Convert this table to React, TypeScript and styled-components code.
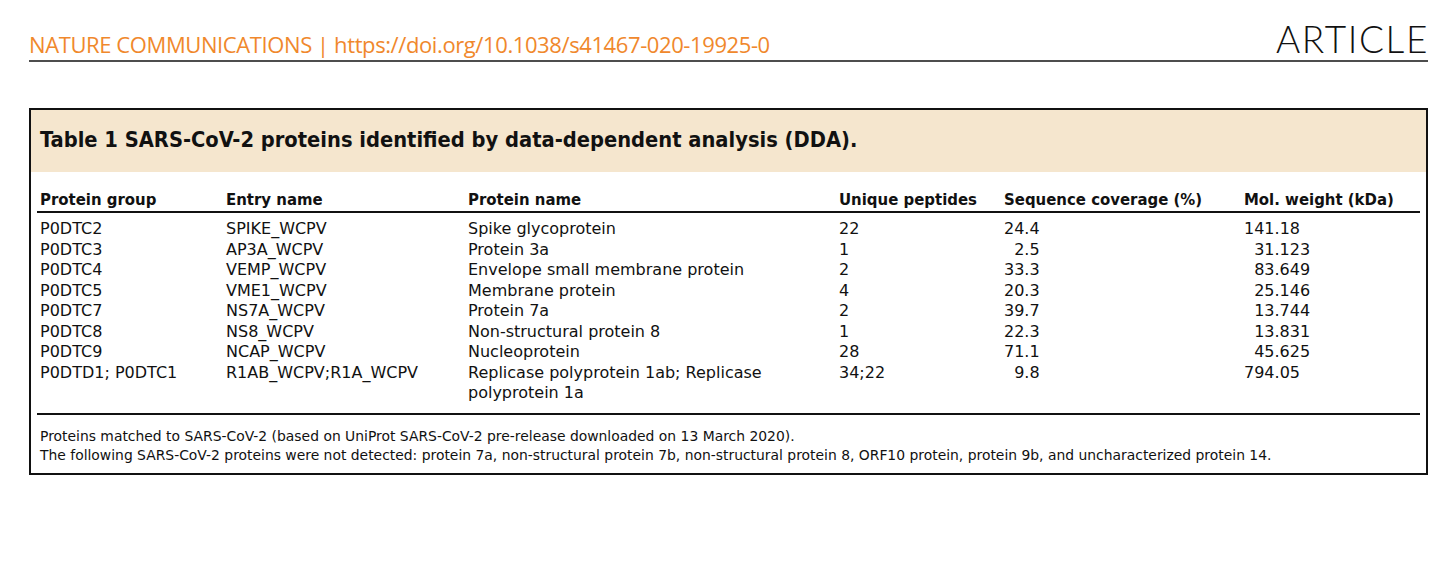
import { createGlobalStyle } from "styled-components";
import styled from "styled-components";

const GlobalStyle = createGlobalStyle`
  body {
    margin: 0;
    background: #fff;
    color: #111;
  }
`;

const Page = styled.div`
  width: 1456px;
  box-sizing: border-box;
  padding: 0 28px 0 29px;
`;

const Masthead = styled.header`
  display: flex;
  justify-content: space-between;
  align-items: baseline;
  padding-top: 20px;
  padding-bottom: 3px;
  border-bottom: 2px solid #4d4d4d;
`;

const Journal = styled.div`
  font-family: "Open Sans", sans-serif;
  font-size: 22px;
  line-height: 1;
  color: #f0882c;
  letter-spacing: -0.4px;
`;

const Kind = styled.div`
  font-family: "Lato", sans-serif;
  font-weight: 300;
  font-size: 37px;
  line-height: 1;
  letter-spacing: 1.6px;
  margin-right: -1px;
  color: #111;
`;

const TableBox = styled.section`
  margin-top: 46px;
  border: 2px solid #111;
  font-family: "DejaVu Sans", sans-serif;
`;

const Caption = styled.h2`
  margin: 0;
  height: 62px;
  box-sizing: border-box;
  padding: 16px 9px 0;
  background: #f5e6ce;
  font-family: "DejaVu Sans Condensed", "DejaVu Sans", sans-serif;
  font-size: 21.7px;
  line-height: 27px;
  font-weight: bold;
`;

const Grid = styled.div`
  margin: 0 6px;
  padding-top: 18px;
`;

const cols = "186px 242px 371px 165px 240px 1fr";

const HeadRow = styled.div`
  display: grid;
  grid-template-columns: ${cols};
  border-bottom: 2px solid #111;
  padding-bottom: 1px;
`;

const HeadCell = styled.div`
  padding-left: 3px;
  font-family: "DejaVu Sans Condensed", "DejaVu Sans", sans-serif;
  font-size: 16.6px;
  line-height: 20px;
  font-weight: bold;
`;

const Body = styled.div`
  padding-top: 6px;
  padding-bottom: 9px;
  border-bottom: 2px solid #111;
`;

const Row = styled.div`
  display: grid;
  grid-template-columns: ${cols};
`;

const Cell = styled.div<{ $indent?: number }>`
  padding-left: calc(3px + ${(p) => p.$indent ?? 0}ch);
  font-size: 16px;
  line-height: 20.5px;
`;

const Notes = styled.div`
  padding: 12px 9px 7px;
  font-size: 13.9px;
  line-height: 19.5px;
`;

const Note = styled.p`
  margin: 0;
`;

type Protein = {
  group: string;
  entry: string;
  name: string[];
  peptides: string;
  coverage: string;
  weight: string;
};

const proteins: Protein[] = [
  { group: "P0DTC2", entry: "SPIKE_WCPV", name: ["Spike glycoprotein"], peptides: "22", coverage: "24.4", weight: "141.18" },
  { group: "P0DTC3", entry: "AP3A_WCPV", name: ["Protein 3a"], peptides: "1", coverage: "2.5", weight: "31.123" },
  { group: "P0DTC4", entry: "VEMP_WCPV", name: ["Envelope small membrane protein"], peptides: "2", coverage: "33.3", weight: "83.649" },
  { group: "P0DTC5", entry: "VME1_WCPV", name: ["Membrane protein"], peptides: "4", coverage: "20.3", weight: "25.146" },
  { group: "P0DTC7", entry: "NS7A_WCPV", name: ["Protein 7a"], peptides: "2", coverage: "39.7", weight: "13.744" },
  { group: "P0DTC8", entry: "NS8_WCPV", name: ["Non-structural protein 8"], peptides: "1", coverage: "22.3", weight: "13.831" },
  { group: "P0DTC9", entry: "NCAP_WCPV", name: ["Nucleoprotein"], peptides: "28", coverage: "71.1", weight: "45.625" },
  {
    group: "P0DTD1; P0DTC1",
    entry: "R1AB_WCPV;R1A_WCPV",
    name: ["Replicase polyprotein 1ab; Replicase", "polyprotein 1a"],
    peptides: "34;22",
    coverage: "9.8",
    weight: "794.05",
  },
];

const headers = [
  "Protein group",
  "Entry name",
  "Protein name",
  "Unique peptides",
  "Sequence coverage (%)",
  "Mol. weight (kDa)",
];

// line numbers up on the decimal point
const intDigits = (v: string) => v.split(".")[0].length;

export default function App() {
  return (
    <>
      <GlobalStyle />
      <Page>
        <Masthead>
          <Journal>NATURE COMMUNICATIONS | https://doi.org/10.1038/s41467-020-19925-0</Journal>
          <Kind>ARTICLE</Kind>
        </Masthead>

        <TableBox>
          <Caption>Table 1 SARS-CoV-2 proteins identified by data-dependent analysis (DDA).</Caption>
          <Grid>
            <HeadRow>
              {headers.map((h) => (
                <HeadCell key={h}>{h}</HeadCell>
              ))}
            </HeadRow>
            <Body>
              {proteins.map((p) => (
                <Row key={p.group}>
                  <Cell>{p.group}</Cell>
                  <Cell>{p.entry}</Cell>
                  <Cell>
                    {p.name.map((line, i) => (
                      <div key={i}>{line}</div>
                    ))}
                  </Cell>
                  <Cell>{p.peptides}</Cell>
                  <Cell $indent={2 - intDigits(p.coverage)}>{p.coverage}</Cell>
                  <Cell $indent={3 - intDigits(p.weight)}>{p.weight}</Cell>
                </Row>
              ))}
            </Body>
          </Grid>
          <Notes>
            <Note>Proteins matched to SARS-CoV-2 (based on UniProt SARS-CoV-2 pre-release downloaded on 13 March 2020).</Note>
            <Note>
              The following SARS-CoV-2 proteins were not detected: protein 7a, non-structural protein 7b, non-structural
              protein 8, ORF10 protein, protein 9b, and uncharacterized protein 14.
            </Note>
          </Notes>
        </TableBox>
      </Page>
    </>
  );
}
